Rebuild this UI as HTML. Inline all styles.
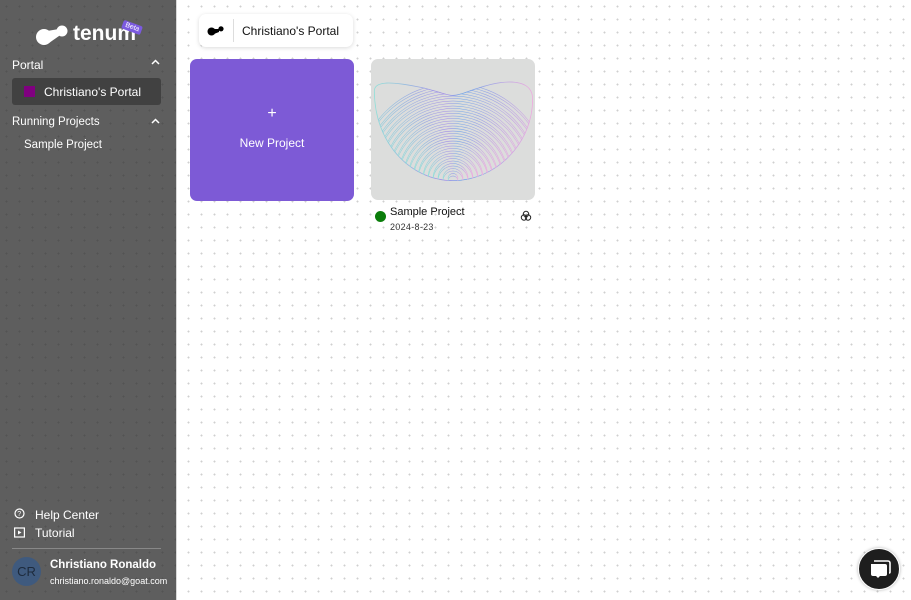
<!DOCTYPE html>
<html><head><style>
*{margin:0;padding:0;box-sizing:border-box}
body{width:911px;height:600px;overflow:hidden;font-family:"Liberation Sans",sans-serif;background:#fff;background-image:radial-gradient(#cfcfcf 0.9px,transparent 1.1px);background-size:13px 13px;position:relative}
.side{position:absolute;left:0;top:0;width:176px;height:600px;background:#5e5e5e;background-image:radial-gradient(#535353 0.9px,transparent 1.1px);background-size:13px 13px;color:#fff}
.t{position:absolute;font-size:12px;color:#fff}
.card{position:absolute;border-radius:7px}
</style></head><body>
<div class="side">
 <svg style="position:absolute;left:35px;top:24px" width="34" height="22" viewBox="0 0 34 22"><circle cx="9" cy="13" r="8" fill="#fff"/><path d="M12 7 L24 5 L24 12 L14 19Z" fill="#fff"/><circle cx="27" cy="7" r="5.5" fill="#fff"/></svg>
 <div class="t" style="left:73px;top:22px;font-size:21px;font-weight:bold">tenum</div>
 <div style="position:absolute;left:122px;top:23px;background:#7b5ae0;color:#fff;font-size:7px;padding:1px 3px;transform:rotate(20deg);border-radius:2px">Beta</div>
 <div class="t" style="left:12px;top:58px">Portal</div>
 <svg style="position:absolute;left:151px;top:59px" width="9" height="6"><path d="M1 5 L4.5 1.5 L8 5" fill="none" stroke="#fff" stroke-width="1.5"/></svg>
 <div style="position:absolute;left:12px;top:78px;width:149px;height:27px;background:#414141;border-radius:3px"></div>
 <div style="position:absolute;left:24px;top:86px;width:11px;height:11px;background:#800080"></div>
 <div class="t" style="left:44px;top:85px">Christiano's Portal</div>
 <div class="t" style="left:12px;top:116px;font-size:11.5px">Running Projects</div>
 <svg style="position:absolute;left:151px;top:118px" width="9" height="6"><path d="M1 5 L4.5 1.5 L8 5" fill="none" stroke="#fff" stroke-width="1.5"/></svg>
 <div class="t" style="left:24px;top:139px;font-size:11.5px">Sample Project</div>
 <svg style="position:absolute;left:14px;top:508px" width="11" height="11"><circle cx="5.5" cy="5.5" r="4.5" fill="none" stroke="#fff" stroke-width="1.2"/><text x="3.3" y="8" font-size="7" fill="#fff" font-family="Liberation Sans">?</text></svg>
 <div class="t" style="left:35px;top:508px">Help Center</div>
 <svg style="position:absolute;left:14px;top:527px" width="11" height="11"><rect x="0.6" y="1" width="9.8" height="9" fill="none" stroke="#fff" stroke-width="1.2"/><path d="M4 3.5 L7.5 5.5 L4 7.5Z" fill="#fff"/></svg>
 <div class="t" style="left:35px;top:526px">Tutorial</div>
 <div style="position:absolute;left:12px;top:548px;width:149px;height:1px;background:#888"></div>
 <div style="position:absolute;left:12px;top:557px;width:29px;height:29px;border-radius:50%;background:#3f5a7e;color:#1d2a3c;font-size:13px;text-align:center;line-height:29px">CR</div>
 <div class="t" style="left:50px;top:559px;font-weight:bold;font-size:11.5px">Christiano Ronaldo</div>
 <div class="t" style="left:50px;top:576px;font-size:9px">christiano.ronaldo@goat.com</div>
</div>
<div style="position:absolute;left:176px;top:0;width:1px;height:600px;background:#d8d8d8"></div>
<div class="card" style="left:199px;top:14px;width:154px;height:33px;background:#fff;box-shadow:0 1px 4px rgba(0,0,0,.15)">
 <svg style="position:absolute;left:8px;top:11px" width="18" height="12"><circle cx="4.5" cy="6.5" r="4" fill="#000"/><path d="M6 4 L12 4 L12 7 L7 9Z" fill="#000"/><circle cx="14" cy="3.8" r="2.6" fill="#000"/></svg>
 <div style="position:absolute;left:34px;top:5px;width:1px;height:23px;background:#ddd"></div>
 <div style="position:absolute;left:43px;top:10px;font-size:12px;color:#111">Christiano's Portal</div>
</div>
<div class="card" style="left:190px;top:59px;width:164px;height:142px;background:#7d5ad6;color:#fff;text-align:center">
 <div style="position:absolute;top:46px;width:100%;font-size:16px">+</div>
 <div style="position:absolute;top:77px;width:100%;font-size:12px">New Project</div>
</div>
<div class="card" style="left:371px;top:59px;width:164px;height:141px;background:#dcdddc;overflow:hidden">
 <svg width="164" height="141" viewBox="0 0 164 141">
  <defs><clipPath id="c"><path d="M3 32 C3 20 25 23 50 28 C68 32 75 36 82 36 C90 36 100 30 120 25 C142 20 162 22 162 40 C162 85 125 122 82 122 C40 122 3 85 3 32Z"/></clipPath>
  <linearGradient id="g" x1="0" x2="1"><stop offset="0" stop-color="#8fe0d8"/><stop offset=".45" stop-color="#a08ae8"/><stop offset=".55" stop-color="#6fa4e8"/><stop offset="1" stop-color="#f0a8e0"/></linearGradient></defs>
  <g clip-path="url(#c)" fill="none" stroke="url(#g)" stroke-width=".6">
   <path d="M3 32 C3 20 25 23 50 28 C68 32 75 36 82 36 C90 36 100 30 120 25 C142 20 162 22 162 40 C162 85 125 122 82 122 C40 122 3 85 3 32Z" stroke-width="1.5"/>
   <g id="a">
   <path d="M77 122 A5 5 0 0 1 87 122"/><path d="M72 122 A10 10 0 0 1 92 122"/><path d="M67 122 A15 15 0 0 1 97 122"/><path d="M62 122 A20 20 0 0 1 102 122"/><path d="M57 122 A25 25 0 0 1 107 122"/><path d="M52 122 A30 30 0 0 1 112 122"/><path d="M47 122 A35 35 0 0 1 117 122"/><path d="M42 122 A40 40 0 0 1 122 122"/><path d="M37 122 A45 45 0 0 1 127 122"/><path d="M32 122 A50 50 0 0 1 132 122"/><path d="M27 122 A55 55 0 0 1 137 122"/><path d="M22 122 A60 60 0 0 1 142 122"/><path d="M17 122 A65 65 0 0 1 147 122"/><path d="M12 122 A70 70 0 0 1 152 122"/><path d="M7 122 A75 75 0 0 1 157 122"/><path d="M2 122 A80 80 0 0 1 162 122"/><path d="M-3 122 A85 85 0 0 1 167 122"/><path d="M-8 122 A90 90 0 0 1 172 122"/><path d="M-13 122 A95 95 0 0 1 177 122"/>
   </g>
   <use href="#a" transform="translate(0,-2.5)"/>
  </g>
 </svg>
</div>
<div style="position:absolute;left:375px;top:211px;width:11px;height:11px;border-radius:50%;background:#0a7d0a"></div>
<div style="position:absolute;left:390px;top:206px;font-size:11px;color:#111">Sample Project</div>
<div style="position:absolute;left:390px;top:222px;font-size:9px;color:#333;letter-spacing:.3px">2024-8-23</div>
<svg style="position:absolute;left:520px;top:210px" width="12" height="12"><g fill="none" stroke="#222" stroke-width="1"><circle cx="6" cy="4" r="2.7"/><circle cx="4" cy="7.5" r="2.7"/><circle cx="8" cy="7.5" r="2.7"/></g></svg>
<div style="position:absolute;left:858px;top:548px;width:42px;height:42px;border-radius:50%;background:#1e1e1e;border:1.5px solid #fff;box-shadow:0 0 3px rgba(0,0,0,.3)">
 <svg style="position:absolute;left:9px;top:9px" width="24" height="24" viewBox="0 0 24 24"><path d="M6 3 H20 A2 2 0 0 1 22 5 V14 A1 1 0 0 1 21 15" fill="none" stroke="#fff" stroke-width="1.6"/><path d="M3 6 H17 A2 2 0 0 1 19 8 V16 A2 2 0 0 1 17 18 H12 L10 20 L8 18 H5 A2 2 0 0 1 3 16Z" fill="#fff"/></svg>
</div>
</body></html>
